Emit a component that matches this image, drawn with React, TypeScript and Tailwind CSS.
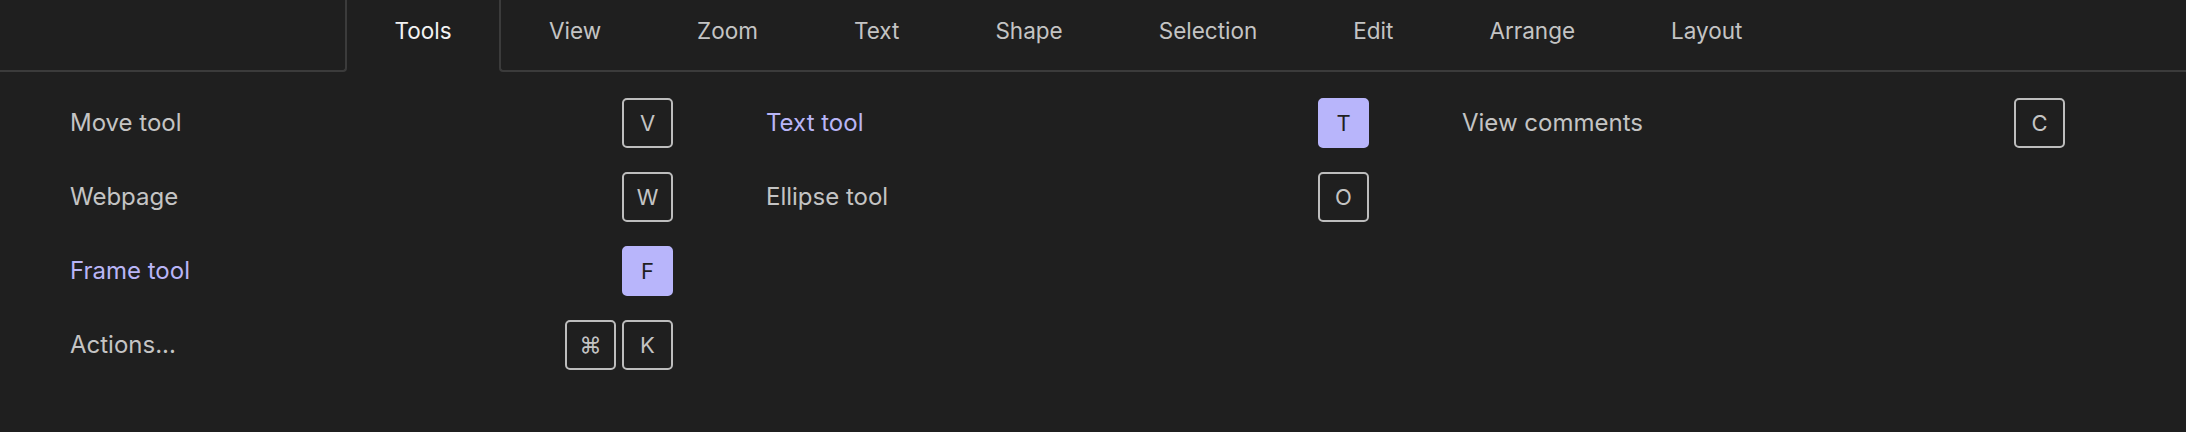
import React from 'react'

interface Shortcut {
  label: string
  keys: string[]
  active?: boolean
}

const tabs = ['View', 'Zoom', 'Text', 'Shape', 'Selection', 'Edit', 'Arrange', 'Layout']

const columns: Shortcut[][] = [
  [
    { label: 'Move tool', keys: ['V'] },
    { label: 'Webpage', keys: ['W'] },
    { label: 'Frame tool', keys: ['F'], active: true },
    { label: 'Actions...', keys: ['⌘', 'K'] },
  ],
  [
    { label: 'Text tool', keys: ['T'], active: true },
    { label: 'Ellipse tool', keys: ['O'] },
  ],
  [{ label: 'View comments', keys: ['C'] }],
]

function Key({ k, active }: { k: string; active?: boolean }) {
  return (
    <span
      className={`flex h-[50px] w-[51px] items-center justify-center rounded-[5px] border-2 text-[22px] ${
        active ? 'border-[#b8b5fb] bg-[#b8b5fb] text-[#1f1f1f]' : 'border-[#bdbdbd] text-[#c4c4c4]'
      }`}
    >
      {k}
    </span>
  )
}

export default function App() {
  return (
    <div
      className="h-[432px] w-[2186px] bg-[#1f1f1f] text-[#c4c4c4]"
      style={{ fontFamily: 'Inter, "Noto Sans", sans-serif' }}
    >
      {/* Tab bar */}
      <div className="flex h-[72px]">
        <div className="w-[347px] rounded-br-[4px] border-r-2 border-b-2 border-[#3b3b3b]" />
        <div className="flex w-[152px] justify-center pt-[13px] text-[22.5px] leading-[36px] text-[#f2f2f2]">
          Tools
        </div>
        <div className="flex flex-1 rounded-bl-[4px] border-b-2 border-l-2 border-[#3b3b3b]">
          {tabs.map(t => (
            <div key={t} className="px-12 pt-[13px] text-[22.5px] leading-[36px] text-[#c4c4c4]">
              {t}
            </div>
          ))}
        </div>
      </div>

      {/* Shortcut grid */}
      <div className="grid grid-cols-[603px_603px_603px] gap-x-[93px] pt-[26px] pl-[70px]">
        {columns.map((col, i) => (
          <div key={i} className="flex flex-col gap-y-[24px]">
            {col.map(s => (
              <div key={s.label} className="flex h-[50px] items-center justify-between">
                <span className={`text-[24px] ${s.active ? 'text-[#b9b5f6]' : 'text-[#c4c4c4]'}`}>{s.label}</span>
                <div className="flex gap-[6px]">
                  {s.keys.map(k => (
                    <Key key={k} k={k} active={s.active} />
                  ))}
                </div>
              </div>
            ))}
          </div>
        ))}
      </div>
    </div>
  )
}
